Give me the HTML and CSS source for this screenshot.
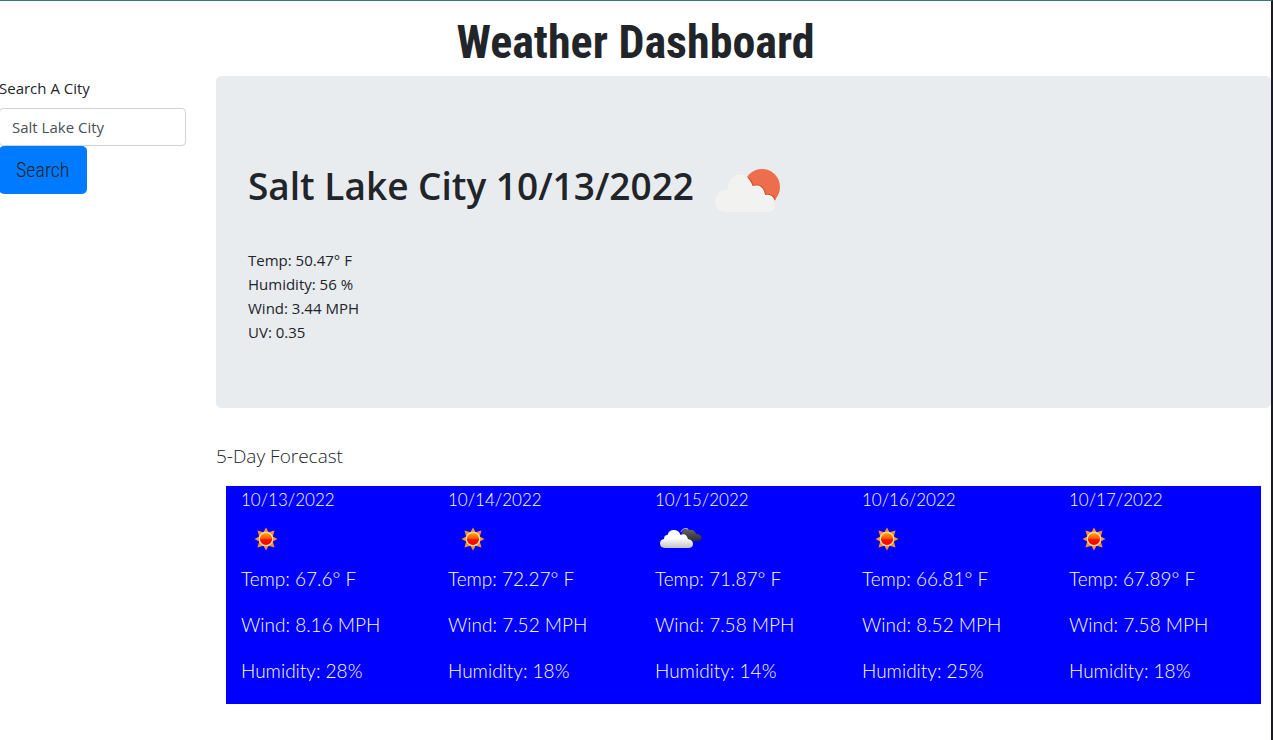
FILE: index.html
```html
<!DOCTYPE html>
<html lang="en">
<head>
<meta charset="utf-8">
<meta name="viewport" content="width=device-width, initial-scale=1">
<title>Weather Dashboard</title>
<link rel="stylesheet" href="styles.css">
</head>
<body>
<svg class="defs" width="0" height="0" aria-hidden="true">
  <defs>
    <linearGradient id="core" x1="0" y1="0" x2="0" y2="1">
      <stop offset="0" stop-color="#ffb010"/><stop offset=".45" stop-color="#ff5a00"/><stop offset=".55" stop-color="#ff1000"/><stop offset="1" stop-color="#f00000"/>
    </linearGradient>
    <linearGradient id="puff" x1="0" y1="0" x2="0" y2="1">
      <stop offset=".45" stop-color="#fff"/><stop offset="1" stop-color="#c4c4c4"/>
    </linearGradient>
    <linearGradient id="dark" x1="0" y1="0" x2="0" y2="1">
      <stop offset="0" stop-color="#666"/><stop offset="1" stop-color="#2c2c2c"/>
    </linearGradient>
    <symbol id="sun" viewBox="0 0 50 50">
      <path fill="#f79422" d="M25 13.500L27.600 18.200L33.500 16.500L31.800 22.400L36.500 25L31.800 27.600L33.500 33.500L27.600 31.800L25 36.500L22.400 31.800L16.500 33.500L18.200 27.600L13.500 25L18.200 22.400L16.500 16.500L22.400 18.200Z"/>
      <circle cx="25" cy="25" r="6.700" fill="url(#core)" stroke="#ffe2b0" stroke-width="1.200"/>
    </symbol>
    <symbol id="clouds" viewBox="0 0 50 50">
      <path fill="url(#dark)" d="M27 27V19A5 5 0 0 1 35 16A5 5 0 0 1 41 20Q46 20 46.500 24Q46 27 42 27Z"/>
      <path fill="none" stroke="#bbb" d="M26 18A5 5 0 0 1 33 15"/>
      <path fill="url(#puff)" d="M10 34Q5 33.500 5 29.500Q5 25.500 9 25Q9 21 12.500 21Q14 16 18.500 16Q24 16 25.500 21Q31 18.500 33 25Q38 26 38 30Q38 34 33 34Z"/>
    </symbol>
  </defs>
</svg>
<header class="page-header"><h1 class="page-title">Weather Dashboard</h1></header>
<main class="layout">
  <form class="search">
    <label class="search-label" for="city">Search A City</label>
    <input class="search-input" id="city" type="text" value="Salt Lake City">
    <button class="search-button" type="button">Search</button>
  </form>
  <div class="content">
    <section class="current">
      <h2 class="current-title">Salt Lake City 10/13/2022
        <svg class="current-icon" viewBox="0 0 100 70" role="img" aria-label="Partly cloudy">
          <circle cx="64" cy="32" r="18" fill="#ec6e4c"/>
          <path d="M50 23Q54 27 55 31Q65 28 67 40Q74 39 77 45" fill="none" stroke="#d94f2e" stroke-width="2"/>
          <path fill="#fff" d="M48 22Q53 26 54.500 31Q65 28 67 40Q74 39 76.500 45L70 52L45 45Z"/>
          <path fill="#f2f2f0" d="M29 57Q17 56 17 46Q18 35 30 34.500Q30 24 37 21Q43 17 49 22Q53 26 54 32Q65 29.500 66.500 41Q77 42 77 50Q77 57 69 57Z"/>
        </svg>
      </h2>
      <ul class="readings">
        <li>Temp: 50.47° F</li><li>Humidity: 56 %</li><li>Wind: 3.44 MPH</li><li>UV: 0.35</li>
      </ul>
    </section>
    <h2 class="forecast-title">5-Day Forecast</h2>
    <section class="forecast">
      <article class="day"><h3 class="date">10/13/2022</h3><svg class="icon"><use href="#sun"/></svg><p>Temp: 67.6° F</p><p>Wind: 8.16 MPH</p><p>Humidity: 28%</p></article>
      <article class="day"><h3 class="date">10/14/2022</h3><svg class="icon"><use href="#sun"/></svg><p>Temp: 72.27° F</p><p>Wind: 7.52 MPH</p><p>Humidity: 18%</p></article>
      <article class="day"><h3 class="date">10/15/2022</h3><svg class="icon"><use href="#clouds"/></svg><p>Temp: 71.87° F</p><p>Wind: 7.58 MPH</p><p>Humidity: 14%</p></article>
      <article class="day"><h3 class="date">10/16/2022</h3><svg class="icon"><use href="#sun"/></svg><p>Temp: 66.81° F</p><p>Wind: 8.52 MPH</p><p>Humidity: 25%</p></article>
      <article class="day"><h3 class="date">10/17/2022</h3><svg class="icon"><use href="#sun"/></svg><p>Temp: 67.89° F</p><p>Wind: 7.58 MPH</p><p>Humidity: 18%</p></article>
    </section>
  </div>
</main>
</body>
</html>
```
FILE: styles.css
```css
* { box-sizing: border-box; }
body {
  margin: 0;
  min-height: 100vh;
  border-top: 1px solid #37797f;
  border-right: 2px solid #1d1b26;
  background: #fff;
  color: #212529;
  font: 16px/24px "Open Sans", sans-serif;
}
h1, h2, h3, p, ul { margin: 0; padding: 0; }
.defs { display: block; height: 0; }
.page-title {
  padding-top: 7px;
  text-align: center;
  font: bold 46px/68px "Roboto Condensed", Roboto, sans-serif;
}
.layout {
  display: grid;
  grid-template-columns: repeat(12, minmax(0, 1fr));
  column-gap: 30px;
  margin-left: -1px;
}
.search {
  grid-column: span 2;
  display: flex;
  flex-direction: column;
  align-items: flex-start;
}
.search-label { margin-bottom: 8px; font-size: 15px; }
.search-input {
  width: 100%;
  height: 38px;
  padding: 6px 12px;
  border: 1px solid #ced4da;
  border-radius: 4px;
  color: #495057;
  font: 15px/24px "Open Sans", sans-serif;
}
.search-button {
  height: 48px;
  padding: 8px 17px;
  border: 0;
  border-radius: 5px;
  background: #007bff;
  color: #212529;
  font: 300 20px/30px "Roboto Condensed", Roboto, sans-serif;
}
.content { grid-column: span 10; }
.current {
  padding: 64px 32px;
  border-radius: 5px;
  background: #e9ecef;
}
.current-title {
  display: flex;
  align-items: center;
  height: 92px;
  margin-bottom: 16px;
  font-size: 37px;
  font-weight: 600;
  line-height: 48px;
}
.current-icon { width: 100px; height: 70px; margin: 8px 0 0 4px; }
.readings { list-style: none; font-size: 15px; }
.forecast-title {
  margin: 36px 0 18px;
  font-size: 19px;
  font-weight: 300;
  line-height: 24px;
}
.forecast {
  display: grid;
  grid-template-columns: repeat(5, 1fr);
  margin: 0 10px;
  padding-bottom: 2px;
  background: #00f;
  color: #fff;
  font: 300 19px/30px Lato, sans-serif;
}
.day { padding: 0 15px; }
.date { font: inherit; font-size: 17px; line-height: 28px; }
.icon { display: block; width: 50px; height: 50px; }
.day p { margin-bottom: 16px; }
```
